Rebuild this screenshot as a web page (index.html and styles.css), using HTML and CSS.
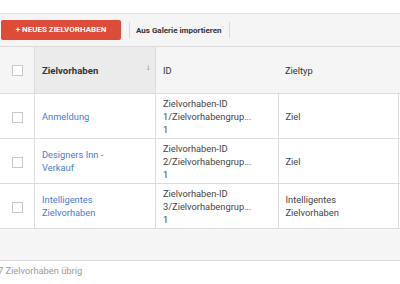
FILE: index.html
```html
<!DOCTYPE html>
<html lang="de">

<head>
  <meta charset="UTF-8" />
  <title>Zielvorhaben</title>
  <link rel="stylesheet" href="styles.css">
</head>

<body>
  <div class="top"></div>

  <!-- Werkzeugleiste -->
  <div class="toolbar">
    <a href="#" class="btn-new">+ NEUES ZIELVORHABEN</a>
    <span class="sep"></span>
    <a href="#" class="btn-import">Aus Galerie importieren</a>
    <span class="sep"></span>
  </div>

  <!-- Tabelle -->
  <table class="goals">
    <thead>
      <tr>
        <th class="c-check"><span class="box"></span></th>
        <th class="c-name sorted">Zielvorhaben <span class="arrow">&#8595;</span></th>
        <th class="c-id">ID</th>
        <th class="c-type">Zieltyp</th>
        <th class="c-more"></th>
      </tr>
    </thead>
    <tbody>
      <tr>
        <td class="c-check"><span class="box"></span></td>
        <td class="c-name"><a href="#">Anmeldung</a></td>
        <td class="c-id">Zielvorhaben-ID<br>1/Zielvorhabengrup...<br>1</td>
        <td class="c-type">Ziel</td>
        <td class="c-more"></td>
      </tr>
      <tr>
        <td class="c-check"><span class="box"></span></td>
        <td class="c-name"><a href="#">Designers Inn -<br>Verkauf</a></td>
        <td class="c-id">Zielvorhaben-ID<br>2/Zielvorhabengrup...<br>1</td>
        <td class="c-type">Ziel</td>
        <td class="c-more"></td>
      </tr>
      <tr>
        <td class="c-check"><span class="box"></span></td>
        <td class="c-name"><a href="#">Intelligentes<br>Zielvorhaben</a></td>
        <td class="c-id">Zielvorhaben-ID<br>3/Zielvorhabengrup...<br>1</td>
        <td class="c-type">Intelligentes<br>Zielvorhaben</td>
        <td class="c-more"></td>
      </tr>
    </tbody>
  </table>

  <!-- Fusszeile -->
  <div class="foot-bar"></div>
  <p class="remain">7 Zielvorhaben übrig</p>
</body>

</html>
```

FILE: styles.css
```css
/* 초기화 */
html,
body {
  margin: 0;
  padding: 0;
}

body {
  width: 400px;
  height: 284px;
  overflow: hidden;
  background-color: #fff;
  font-family: Roboto, "Liberation Sans", sans-serif;
  font-size: 9.3px;
  color: #444;
}

a {
  text-decoration: none;
}

.top {
  height: 13px;
}

/* 툴바 */
.toolbar {
  display: flex;
  align-items: center;
  height: 32px;
  padding-left: 1px;
  background-color: #f5f5f5;
  border-top: 1px solid #e2e2e2;
}

.btn-new {
  display: block;
  width: 120px;
  height: 20px;
  line-height: 20px;
  text-align: center;
  background-color: #dd4b39;
  color: #fff;
  font-size: 8px;
  font-weight: bold;
  border-radius: 2px;
}

.sep {
  width: 1px;
  height: 16px;
  margin: 0 6px 0 8px;
  background-color: #d8d8d8;
}

.btn-import {
  color: #333;
  font-size: 8px;
  font-weight: bold;
}

/* 테이블 */
.goals {
  border-collapse: collapse;
  table-layout: fixed;
  width: 440px;
}

.goals th,
.goals td {
  padding: 0 7px;
  text-align: left;
  vertical-align: middle;
  border: 1px solid #dcdcdc;
  border-top: 0;
}

.goals th {
  height: 46px;
  background-color: #f5f5f5;
  font-weight: normal;
  font-size: 9.3px;
  color: #333;
  border-top: 1px solid #dcdcdc;
  border-left: 0;
  border-right: 0;
}

.goals th.sorted {
  font-weight: bold;
  font-size: 9.6px;
  background-color: #ebebeb;
  border-left: 1px solid #dcdcdc;
  border-right: 1px solid #dcdcdc;
  position: relative;
}

.arrow {
  position: absolute;
  right: 5px;
  top: 16px;
  font-size: 8px;
  color: #555;
}

.goals td {
  height: 44px;
  line-height: 13px;
}

.goals tr > :first-child {
  border-left: 0;
}

/* 칸 너비 (패딩 제외) */
.c-check {
  width: 34px;
  padding: 0 !important;
  text-align: center !important;
}

.c-name {
  width: 106px;
}

.c-id {
  width: 108px;
}

.c-type {
  width: 106px;
}

.c-more {
  width: 29px;
}

.box {
  display: inline-block;
  width: 9px;
  height: 9px;
  margin-left: 1px;
  vertical-align: middle;
  border: 1px solid #c8c8c8;
  background-color: #fff;
}

.c-name a {
  color: #4a7bd0;
}

/* 하단 */
.foot-bar {
  height: 31px;
  background-color: #f5f5f5;
  border-bottom: 1px solid #dcdcdc;
}

.remain {
  margin: 4px 0 0 -2px;
  font-size: 9.3px;
  color: #9a9a9a;
}
```
